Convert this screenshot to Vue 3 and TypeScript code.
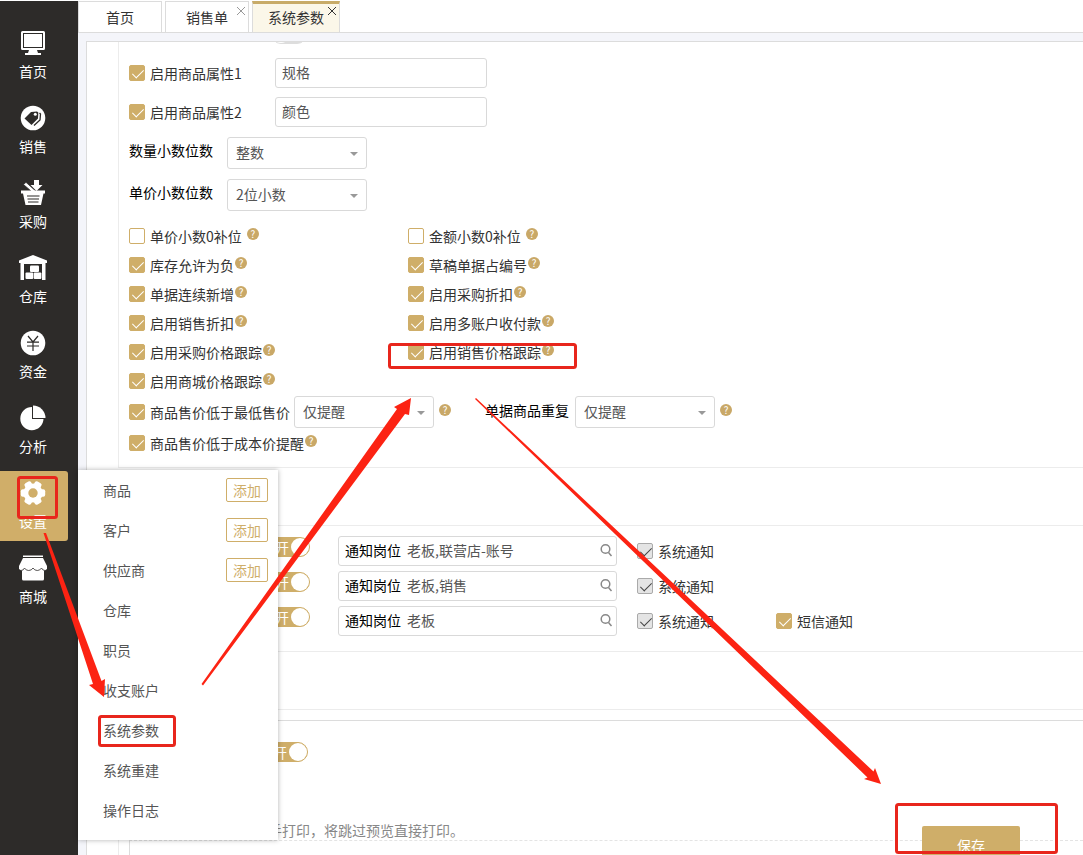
<script setup lang="ts">
import { ref } from 'vue'

interface Option {
  label: string
  checked: boolean
  spaced?: boolean
}
interface Notice {
  posts: string
  sms: boolean
}

const modules: string[] = ['首页', '销售', '采购', '仓库', '资金', '分析', '设置', '商城']
const activeModule = '设置'

const tabs = [
  { label: '首页', closable: false, active: false },
  { label: '销售单', closable: true, active: false },
  { label: '系统参数', closable: true, active: true },
]

const attributes = ref([
  { label: '启用商品属性1', value: '规格' },
  { label: '启用商品属性2', value: '颜色' },
])

const decimals = [
  { id: 'qty', label: '数量小数位数', value: '整数' },
  { id: 'price', label: '单价小数位数', value: '2位小数' },
]

const options = ref<Option[]>([
  { label: '单价小数0补位', checked: false, spaced: true },
  { label: '金额小数0补位', checked: false, spaced: true },
  { label: '库存允许为负', checked: true },
  { label: '草稿单据占编号', checked: true },
  { label: '单据连续新增', checked: true },
  { label: '启用采购折扣', checked: true },
  { label: '启用销售折扣', checked: true },
  { label: '启用多账户收付款', checked: true },
  { label: '启用采购价格跟踪', checked: true },
  { label: '启用销售价格跟踪', checked: true },
  { label: '启用商城价格跟踪', checked: true },
])

const notices: Notice[] = [
  { posts: '老板,联营店-账号', sms: false },
  { posts: '老板,销售', sms: false },
  { posts: '老板', sms: true },
]

const menu = [
  { label: '商品', add: true },
  { label: '客户', add: true },
  { label: '供应商', add: true },
  { label: '仓库', add: false },
  { label: '职员', add: false },
  { label: '收支账户', add: false },
  { label: '系统参数', add: false },
  { label: '系统重建', add: false },
  { label: '操作日志', add: false },
]
</script>

<template>
  <div class="app">
    <nav class="sidebar">
      <a
        v-for="m in modules"
        :key="m"
        href="#"
        class="module"
        :class="{ active: m === activeModule }"
      >
        <svg class="module-icon" viewBox="0 0 28 28" aria-hidden="true">
          <g v-if="m === '首页'">
            <path fill="#fff" d="M3.500 2h21A1.500 1.500 0 0 1 26 3.500v16a1.500 1.500 0 0 1-1.500 1.500H18l1 3h3v2H6v-2h3l1-3H3.500A1.500 1.500 0 0 1 2 19.500v-16A1.500 1.500 0 0 1 3.500 2z" />
            <rect x="4.5" y="4.5" width="19" height="14" fill="none" stroke="#2d2b29" />
          </g>
          <g v-else-if="m === '销售'">
            <circle cx="14" cy="14" r="12.300" fill="#fff" />
            <path fill="#2d2b29" d="M5.500 14.500 12 8l6-.6 1.300 1.200-.3 6L12.500 21z" />
            <circle cx="16.300" cy="10.300" r="1.500" fill="#fff" />
            <path fill="none" stroke="#2d2b29" stroke-width="1.300" d="m20.500 9 1 1-.5 6-6 5.500" />
          </g>
          <g v-else-if="m === '采购'" fill="#fff">
            <path d="M15 1h5v5h3.500l-6 6-6-6H15z" />
            <path stroke="#2d2b29" stroke-width=".8" d="m4.500 5.500 2.500-2.200 9.500 8.500-2.500 2z" />
            <path d="M2 11.500h24v3h-1.500L22 26H6.500L4 14.500H2z" />
            <path fill="none" stroke="#2d2b29" stroke-width="1.200" d="M8 17h12.500M8.500 20h11.500M9 23h10.500" />
          </g>
          <g v-else-if="m === '仓库'" fill="#fff">
            <path d="M14 1 28 6.500V9h-1.500v17H23V10H5v16H1.500V9H0V6.500z" />
            <rect x="11" y="11.500" width="9" height="6.500" rx="1" />
            <rect x="6.500" y="18.500" width="7.700" height="6.500" rx="1" />
            <rect x="14.700" y="18.500" width="7.700" height="6.500" rx="1" />
          </g>
          <g v-else-if="m === '资金'">
            <circle cx="14" cy="14" r="12.300" fill="#fff" />
            <path fill="none" stroke="#2d2b29" stroke-width="1.200" d="m9 7 5 6 5-6M8 13.200h12M8 17h12M14 13v9" />
          </g>
          <g v-else-if="m === '分析'" fill="#fff">
            <path d="M13 3a11.600 11.600 0 1 0 11.500 12H13z" />
            <path d="M14 1.500V14H26.500A12.500 12.500 0 0 0 14 1.500z" />
          </g>
          <g v-else-if="m === '设置'" fill="#fff">
            <circle cx="14" cy="14" r="9.600" />
            <rect x="1.800" y="10.300" width="24.400" height="7.400" rx="2" />
            <rect x="1.800" y="10.300" width="24.400" height="7.400" rx="2" transform="rotate(60 14 14)" />
            <rect x="1.800" y="10.300" width="24.400" height="7.400" rx="2" transform="rotate(120 14 14)" />
            <circle cx="14" cy="14" r="4.700" fill="#d0ae69" />
          </g>
          <g v-else fill="#fff">
            <path d="M4 1.500h20V3H4z" />
            <path d="M4 4h20l4 8v3l-3 2v8a1.500 1.500 0 0 1-1.500 1.500h-19A1.500 1.500 0 0 1 3 25v-8l-3-2v-3z" />
            <path fill="none" stroke="#2d2b29" stroke-width=".8" d="M2 16.500q2.500 0 3.500-2.500 1.300 2.500 4.200 2.500T14 14q1.500 2.500 4.300 2.500t4.200-2.500q1 2.500 3.500 2.500" />
          </g>
        </svg>
        <span>{{ m }}</span>
      </a>
    </nav>

    <div class="workspace">
      <header class="tabs">
        <div v-for="t in tabs" :key="t.label" class="tab" :class="{ current: t.active }">
          <a href="#">{{ t.label }}</a>
          <button v-if="t.closable" type="button" class="close" aria-label="关闭">
            <svg viewBox="0 0 10 10" aria-hidden="true"><path d="m1 1 8 8M9 1 1 9" /></svg>
          </button>
        </div>
      </header>

      <main class="panel">
        <section class="block goods">
          <label class="switch peek"><input type="checkbox" role="switch" aria-label="商品属性" /><i></i></label>

          <div v-for="a in attributes" :key="a.label" class="attribute">
            <label class="check"><input type="checkbox" checked />{{ a.label }}</label>
            <input v-model="a.value" class="text" type="text" :aria-label="a.label" />
          </div>

          <div v-for="d in decimals" :key="d.id" class="decimal">
            <label :for="d.id">{{ d.label }}</label>
            <span class="select"><select :id="d.id"><option>{{ d.value }}</option></select></span>
          </div>

          <div class="options">
            <div v-for="o in options" :key="o.label" class="option" :class="{ spaced: o.spaced }">
              <label class="check"><input v-model="o.checked" type="checkbox" />{{ o.label }}</label>
              <button type="button" class="help" aria-label="帮助">?</button>
            </div>
          </div>

          <div class="limits">
            <label class="check"><input type="checkbox" checked />商品售价低于最低售价</label>
            <span class="select"><select aria-label="商品售价低于最低售价"><option>仅提醒</option></select></span>
            <button type="button" class="help" aria-label="帮助">?</button>
            <label class="repeat" for="repeat">单据商品重复</label>
            <span class="select"><select id="repeat"><option>仅提醒</option></select></span>
            <button type="button" class="help" aria-label="帮助">?</button>
          </div>
          <div class="option">
            <label class="check"><input type="checkbox" checked />商品售价低于成本价提醒</label>
            <button type="button" class="help" aria-label="帮助">?</button>
          </div>
        </section>

        <section class="block notices">
          <div v-for="(n, i) in notices" :key="i" class="notice">
            <label class="switch on"><input type="checkbox" role="switch" checked /><b>开</b><i></i></label>
            <div class="lookup">
              <label :for="'post' + i">通知岗位</label>
              <input :id="'post' + i" type="text" :value="n.posts" />
              <button type="button" aria-label="查找">
                <svg viewBox="0 0 14 14" aria-hidden="true"><circle cx="6.500" cy="6" r="4.300" /><path d="m9.500 9.500 3 3.500" /></svg>
              </button>
            </div>
            <label class="check"><input type="checkbox" checked disabled />系统通知</label>
            <label v-if="n.sms" class="check sms"><input type="checkbox" checked />短信通知</label>
          </div>
        </section>

        <section class="block spacer"></section>

        <section class="block printing">
          <label class="switch on"><input type="checkbox" role="switch" checked /><b>开</b><i></i></label>
          <p>手打印，将跳过预览直接打印。</p>
          <div class="detail"></div>
        </section>
      </main>
    </div>

    <aside class="flyout">
      <div v-for="item in menu" :key="item.label" class="entry">
        <a href="#">{{ item.label }}</a>
        <button v-if="item.add" type="button">添加</button>
      </div>
    </aside>

    <button type="button" class="save">保存</button>

    <svg class="marks" width="1083" height="855" viewBox="0 0 1083 855" aria-hidden="true">
      <g fill="none" stroke="#e8261c" stroke-width="3">
        <rect x="18.500" y="477.500" width="38" height="40" rx="2" />
        <rect x="99.500" y="716.500" width="75" height="29" rx="2" />
        <rect x="389.500" y="344.500" width="186" height="23" rx="2" />
        <rect x="896.500" y="804.500" width="160" height="48" rx="2" />
      </g>
      <g fill="#fc2313">
        <path d="M43.500 533 46 533 101.500 681 105 679 104 697 89 685 93 684z" />
        <path d="M201.500 684 397 409 394 407 411 398 409 415 405 414 203 685.500z" />
        <path d="M476 398 873.500 771.500 875 768 881 784 864 779 867.500 777.500 475 399z" />
      </g>
    </svg>
  </div>
</template>

<style>
body {
  margin: 0;
  background: #fff;
}
</style>

<style scoped>
.app {
  position: relative;
  display: flex;
  height: 100vh;
  overflow: hidden;
  box-sizing: border-box;
  padding-top: 1px;
  color: #333;
  font: 14px/20px "Noto Sans CJK SC", sans-serif;
}
.app * {
  box-sizing: border-box;
}
a {
  color: inherit;
  text-decoration: none;
}
button,
input,
select {
  margin: 0;
  padding: 0;
  border: 0;
  background: none;
  color: inherit;
  font: inherit;
}

.sidebar {
  flex: 0 0 78px;
  display: flex;
  flex-direction: column;
  gap: 5px;
  padding-top: 20px;
  background: #2d2b29;
}
.module {
  display: flex;
  flex-direction: column;
  align-items: center;
  flex: 0 0 70px;
  width: 68px;
  padding: 8px 2px 0 0;
  border-radius: 0 3px 3px 0;
  color: #fff;
}
.module.active {
  background: #d0ae69;
}
.module-icon {
  width: 28px;
  height: 28px;
  margin-bottom: 4px;
}

.workspace {
  flex: 1;
  min-width: 0;
  display: flex;
  flex-direction: column;
  background: #f4f5fa;
}
.tabs {
  flex: 0 0 31px;
  display: flex;
  gap: 3px;
  border-bottom: 1px solid #dcdcdc;
  background: #fff;
}
.tab {
  position: relative;
  padding: 5px 20px 0;
  border: 1px solid #dcdcdc;
  border-bottom: 0;
  white-space: nowrap;
}
.tab:first-child {
  padding: 5px 27px 0;
}
.tab.current {
  height: 31px;
  padding: 3px 15px 0;
  border-top: 3px solid #c8ab68;
  background: #fbf7e9;
}
.close {
  position: absolute;
  top: 4px;
  right: 2px;
  width: 10px;
  height: 10px;
  line-height: 0;
}
.current .close {
  top: 2px;
}
.close svg {
  width: 10px;
  height: 10px;
  fill: none;
  stroke: #999;
}
.current .close svg {
  stroke: #333;
}

.panel {
  flex: 1;
  min-height: 0;
  overflow: hidden;
  margin: 8px 0 0 8px;
  padding-left: 31px;
  border-top: 1px solid #dcdcdc;
  border-left: 1px solid #dcdcdc;
  background: #fff;
}
.block {
  border-left: 1px solid #ececec;
  border-bottom: 1px solid #ececec;
}
.goods {
  padding: 0 10px 10px;
}

.switch {
  position: relative;
  display: flex;
  align-items: center;
  justify-content: flex-end;
  width: 48px;
  height: 20px;
  border: 1px solid #cfae69;
  border-radius: 10px;
  background: #cfae69;
  color: #fff;
}
.switch input {
  position: absolute;
  inset: 0;
  opacity: 0;
}
.switch b {
  margin-right: 2px;
  font-weight: 400;
}
.switch i {
  width: 18px;
  height: 18px;
  border-radius: 50%;
  background: #fff;
}
.switch.peek {
  justify-content: flex-start;
  width: 36px;
  margin: -18px 0 14px 142px;
  border-color: #ddd;
  background: #ddd;
}

.check {
  display: flex;
  align-items: center;
  gap: 5px;
  line-height: 18px;
  white-space: nowrap;
}
.check input {
  position: relative;
  flex: none;
  appearance: none;
  width: 16px;
  height: 16px;
  border: 1px solid #cfae69;
  border-radius: 2px;
  background: #fff;
}
.check input:checked {
  background: #cfae69;
}
.check input:checked::after {
  content: "";
  position: absolute;
  top: 1px;
  left: 5px;
  width: 5px;
  height: 10px;
  border: solid #fff;
  border-width: 0 1px 1px 0;
  transform: rotate(45deg);
}
.check input:disabled {
  border-color: #aaa;
  background: #e4e4e4;
}
.check input:disabled::after {
  border-color: #444;
}

.attribute {
  display: grid;
  grid-template-columns: 146px 212px;
  align-items: center;
  margin-bottom: 9px;
}
.text {
  height: 30px;
  padding: 0 6px 2px;
  border: 1px solid #d9d9d9;
  border-radius: 3px;
  color: #555;
}
.decimal {
  display: flex;
  gap: 14px;
  margin-top: 10px;
}
.decimal label {
  padding-top: 3px;
  color: #000;
}
.select {
  position: relative;
  display: block;
  width: 140px;
  height: 32px;
}
.select select {
  appearance: none;
  width: 100%;
  height: 100%;
  padding: 0 24px 2px 8px;
  border: 1px solid #d9d9d9;
  border-radius: 3px;
  background: #fff;
  color: #555;
}
.select::after {
  content: "";
  position: absolute;
  top: 15px;
  right: 9px;
  border: 4px solid transparent;
  border-top-color: #999;
  border-bottom: 0;
  pointer-events: none;
}
.options {
  display: grid;
  grid-template-columns: 279px 1fr;
  margin: 10px 0 1px;
}
.option {
  display: flex;
  align-items: center;
  gap: 1px;
  height: 29px;
}
.option.spaced {
  gap: 5px;
}
.help {
  width: 12px;
  height: 12px;
  margin-bottom: 3px;
  border-radius: 50%;
  background: #c9a867;
  color: #fff;
  font-size: 10px;
  line-height: 12px;
  text-align: center;
}
.limits {
  display: flex;
  align-items: center;
  gap: 4px;
}
.limits .help {
  margin: 0 0 4px 1px;
}
.limits .repeat {
  margin: 0 2px 4px 30px;
  color: #000;
}

.notices {
  margin-top: 57px;
  padding: 10px 0 15px 143px;
  border-top: 1px solid #ececec;
}
.notice {
  display: grid;
  grid-template-columns: 76px 279px 20px 139px 1fr;
  align-items: center;
}
.notice + .notice {
  margin-top: 5px;
}
.notice .switch {
  align-self: start;
  margin-top: 1px;
}
.notice .check {
  grid-column: 4;
}
.notice .check.sms {
  grid-column: 5;
}
.lookup {
  display: flex;
  align-items: center;
  gap: 6px;
  height: 30px;
  padding: 0 3px 2px 6px;
  border: 1px solid #d9d9d9;
  border-radius: 3px;
}
.lookup label {
  color: #000;
}
.lookup input {
  flex: 1;
  min-width: 0;
  color: #555;
}
.lookup button {
  width: 14px;
  height: 14px;
  line-height: 0;
}
.lookup svg {
  width: 14px;
  height: 14px;
  fill: none;
  stroke: #888;
  stroke-width: 1.5;
}

.spacer {
  height: 58px;
  border-left: 0;
}
.printing {
  margin-top: 10px;
  padding: 21px 0 0 10px;
  border-top: 1px solid #dcdcdc;
}
.printing .switch {
  margin-left: 131px;
}
.printing p {
  margin: 58px 0 0 139px;
  height: 20px;
  color: #888;
}
.detail {
  height: 40px;
  border-top: 1px dashed #e4e4e4;
  border-left: 1px solid #dcdcdc;
}

.flyout {
  position: absolute;
  top: 470px;
  left: 78px;
  width: 200px;
  padding-bottom: 10px;
  background: #fff;
  box-shadow: 0 0 5px rgba(0, 0, 0, 0.3);
  color: #555;
}
.entry {
  display: flex;
  align-items: center;
  justify-content: space-between;
  height: 40px;
  padding: 0 10px 0 25px;
}
.entry button {
  width: 42px;
  height: 24px;
  border: 1px solid #cfae69;
  border-radius: 2px;
  color: #cfae69;
  line-height: 20px;
}
.save {
  position: absolute;
  right: 63px;
  bottom: -9px;
  width: 98px;
  height: 38px;
  border-radius: 2px;
  background: #cfae69;
  color: #fff;
}
.marks {
  position: absolute;
  top: 0;
  left: 0;
  pointer-events: none;
}
</style>
